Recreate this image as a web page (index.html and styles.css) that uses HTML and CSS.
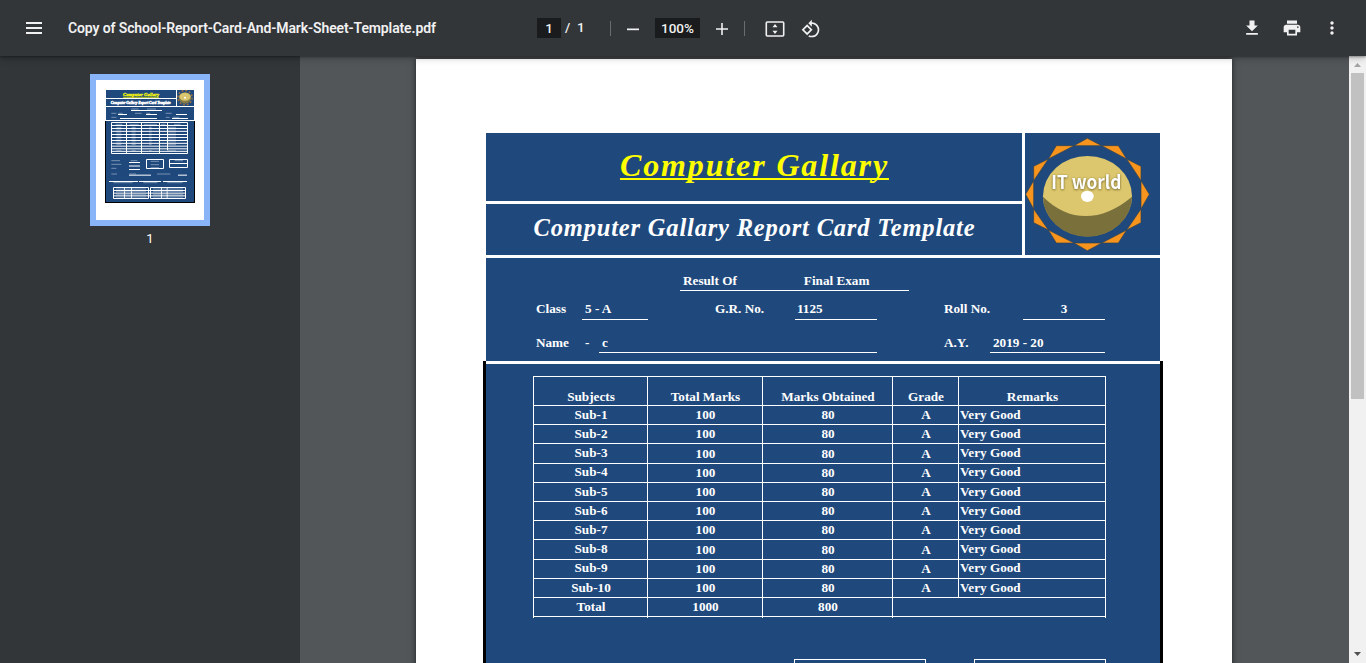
FILE: index.html
```html
<!DOCTYPE html>
<html lang="en">
<head>
<meta charset="utf-8">
<title>Copy of School-Report-Card-And-Mark-Sheet-Template.pdf</title>
<link rel="stylesheet" href="styles.css">
</head>
<body>
<header class="toolbar">
  <svg class="menu" width="24" height="24" viewBox="0 0 24 24"><path d="M4 6h16v2H4zm0 5h16v2H4zm0 5h16v2H4z"/></svg>
  <span class="title">Copy of School-Report-Card-And-Mark-Sheet-Template.pdf</span>
  <div class="controls">
    <span class="box page-no">1</span><span class="count">/&nbsp; 1</span>
    <i class="divider"></i>
    <svg class="minus" width="20" height="20" viewBox="0 0 20 20"><path d="M4 9.5h12v1.7H4z"/></svg>
    <span class="box zoom">100%</span>
    <svg class="plus" width="20" height="20" viewBox="0 0 20 20"><path d="M4 9.2h5.2V4h1.6v5.2H16v1.6h-5.2V16H9.200v-5.200H4z"/></svg>
    <i class="divider second"></i>
    <svg class="fit" width="20" height="20" viewBox="0 0 20 20"><rect x="1.300" y="3" width="17.400" height="14" rx="1" fill="none" stroke="#f1f1f1" stroke-width="1.600"/><path d="M10 5l2.500 3.200h-5zM10 15l2.500-3.200h-5z"/></svg>
    <svg class="rotate" width="20" height="20" viewBox="0 0 24 24"><path d="M7.340 6.410L.860 12.900l6.490 6.480 6.490-6.480-6.500-6.490zM3.690 12.900l3.660-3.660L11 12.900l-3.660 3.660-3.650-3.660zm15.670-6.260C17.610 4.880 15.300 4 13 4V.760L8.760 5 13 9.240V6c1.790 0 3.580.680 4.950 2.050 2.730 2.730 2.730 7.170 0 9.900C16.580 19.320 14.790 20 13 20c-.970 0-1.940-.210-2.840-.610l-1.490 1.490C10.020 21.620 11.510 22 13 22c2.300 0 4.610-.880 6.360-2.640 3.520-3.510 3.520-9.210 0-12.720z"/></svg>
  </div>
  <div class="actions">
    <svg width="20" height="20" viewBox="0 0 24 24"><path d="M19 9h-4V3H9v6H5l7 7 7-7zM5 18v2h14v-2H5z"/></svg>
    <svg width="20" height="20" viewBox="0 0 24 24"><path d="M19 8H5c-1.660 0-3 1.340-3 3v6h4v4h12v-4h4v-6c0-1.660-1.340-3-3-3zm-3 11H8v-5h8v5zm3-7c-.550 0-1-.450-1-1s.450-1 1-1 1 .450 1 1-.450 1-1 1zm-1-9H6v4h12V3z"/></svg>
    <svg width="20" height="20" viewBox="0 0 24 24"><path d="M12 8c1.100 0 2-.900 2-2s-.900-2-2-2-2 .900-2 2 .900 2 2 2zm0 2c-1.100 0-2 .900-2 2s.900 2 2 2 2-.900 2-2-.900-2-2-2zm0 6c-1.100 0-2 .900-2 2s.900 2 2 2 2-.900 2-2-.900-2-2-2z"/></svg>
  </div>
</header>
<div class="viewer">
  <aside class="sidebar">
    <div class="thumb">
      <svg width="108" height="140" viewBox="48 48 324 420">
        <path fill="#000" d="M75 171h270v246H75z"/>
        <path fill="#1f497d" d="M78 78h264v90H78zM78 171h264v243H78z"/>
        <path fill="#fff" d="M78 102h210v3H78zM78 126h264v3H78zM288 78h3v48h-3z"/>
        <text x="183" y="96" class="mini yellow" text-anchor="middle" textLength="108">Computer Gallary</text>
        <text x="182" y="119" class="mini small" text-anchor="middle" textLength="180">Computer Gallary Report Card Template</text>
        <circle cx="315" cy="101" r="21.500" fill="none" stroke="#a57340" stroke-width="4" stroke-dasharray="6 5.260"/>
        <ellipse cx="315" cy="102" rx="18.500" ry="17" fill="#877b48"/>
        <ellipse cx="315" cy="98" rx="17" ry="12" fill="#d8c56e"/><circle cx="315" cy="101" r="3" fill="#fff"/>
        <g stroke="#fff" stroke-width="3" fill="none">
          <path d="M153 139.500h93M114 151.500h27M198 151.500h33M288 151.500h33M120 163.500h111M276 163.500h48"/>
          <path d="M94.500 175.500h228v93h-228zM139.500 175v93M184.500 175v93M238.500 175v93M262.500 175v84M94 184.500h228M94 193.500h228M94 202h228M94 211.500h228M94 220.500h228M94 229.500h228M94 238h228M94 246.500h228M94 254.500h228M94 262h228"/>
          <path d="M147 295.500h33M147 306h33M147 316.500h33M199.500 286.500h51v27h-51zM268.500 286.500h54v24h-54zM268 298.500h54M147 333.500h66M294 333.500h27M87 352.500h87M177 352.500h66M249 352.500h72"/>
          <path d="M100.500 370.500h105v33h-105zM211.500 370.500h105v33h-105zM100 379.500h216M100 387.500h216M100 395.500h216M133.500 370v33M154.500 370v33M244.500 370v33M261.500 370v33"/>
        </g>
        <g stroke="#a5b6cb" stroke-width="3" opacity=".65">
          <path d="M154 135h22M201 135h27M94 148h15M115 148h13M165 148h20M199 148h12M257 148h18M94 160h15M257 160h12M278 160h20"/>
          <path d="M107 181h20M148 181h28M191 181h40M243 181h14M282 181h20M109 190h15M155 190h12M207 190h8M264 190h24M109 198h15M155 198h12M207 198h8M264 198h24M109 207h15M155 207h12M207 207h8M264 207h24M109 216h15M155 216h12M207 216h8M264 216h24M109 225h15M155 225h12M207 225h8M264 225h24M109 234h15M155 234h12M207 234h8M264 234h24M109 242h15M155 242h12M207 242h8M264 242h24M109 259h15M155 259h12M207 259h8M264 259h24"/>
          <path d="M94 290h26M152 290h20M94 301h30M94 313h15M212 292h25M212 302h25M212 311h25M284 290h25M94 330h17M148 330h20M231 330h40M100 356h58M190 356h42M262 356h46M108 375h90M219 375h90M108 383h90M219 383h90M108 391h90M219 391h90M108 399h90M219 399h90"/>
        </g>
      </svg>
    </div>
    <span class="thumb-no">1</span>
  </aside>
  <main class="canvas">
    <article class="page">
      <section class="head">
        <div class="names">
          <h1>Computer Gallary</h1>
          <h2>Computer Gallary Report Card Template</h2>
        </div>
        <div class="logo">
          <svg width="135" height="122" viewBox="615 24 405 366">
            <path fill="#f7941d" stroke="#33414a" stroke-width="2" d="M802 40L845 62H895L920 102L963 124V167L988 208L963 252V293L920 315L895 354H845L802 377L762 354H709L685 315L641 293V252L617 208L641 167V124L685 102L709 62H762Z"/>
            <path fill="#1f497d" stroke="#33414a" stroke-width="2" d="M762 62H845L920 102L963 167V252L920 315L845 354H762L685 315L641 252V167L685 102Z"/>
            <ellipse cx="802.500" cy="213.500" rx="133.500" ry="120.500" fill="#dcc76e"/>
            <path fill="#79703c" d="M669 215C747 293 845 292 936 215A133.500 120.500 0 0 1 669 215Z"/>
            <text class="logo-text" x="694" y="192" textLength="210" lengthAdjust="spacingAndGlyphs">IT world</text>
            <ellipse cx="802" cy="214" rx="19" ry="17" fill="#fff"/>
          </svg>
        </div>
      </section>
      <section class="info">
        <div class="row result"><div class="line"><span>Result Of</span><span>Final Exam</span></div></div>
        <div class="row ids"><span>Class</span><span class="line">5 - A</span><span class="gap">G.R. No.</span><span class="line tight">1125</span><span class="gap">Roll No.</span><span class="line center">3</span></div>
        <div class="row person"><span>Name</span><span>-</span><span class="line">c</span><span class="gap">A.Y.</span><span class="line">2019 - 20</span></div>
      </section>
      <section class="marks">
        <table>
          <colgroup><col class="c1"><col class="c2"><col class="c3"><col class="c4"><col class="c5"></colgroup>
          <thead><tr><th>Subjects</th><th>Total Marks</th><th>Marks Obtained</th><th>Grade</th><th>Remarks</th></tr></thead>
          <tbody>
            <tr><td>Sub-1</td><td>100</td><td>80</td><td>A</td><td>Very Good</td></tr>
            <tr><td>Sub-2</td><td>100</td><td>80</td><td>A</td><td>Very Good</td></tr>
            <tr class="tall"><td>Sub-3</td><td>100</td><td>80</td><td>A</td><td>Very Good</td></tr>
            <tr class="raised"><td>Sub-4</td><td>100</td><td>80</td><td>A</td><td>Very Good</td></tr>
            <tr><td>Sub-5</td><td>100</td><td>80</td><td>A</td><td>Very Good</td></tr>
            <tr><td>Sub-6</td><td>100</td><td>80</td><td>A</td><td>Very Good</td></tr>
            <tr><td>Sub-7</td><td>100</td><td>80</td><td>A</td><td>Very Good</td></tr>
            <tr class="tall"><td>Sub-8</td><td>100</td><td>80</td><td>A</td><td>Very Good</td></tr>
            <tr class="raised"><td>Sub-9</td><td>100</td><td>80</td><td>A</td><td>Very Good</td></tr>
            <tr><td>Sub-10</td><td>100</td><td>80</td><td>A</td><td>Very Good</td></tr>
            <tr><td>Total</td><td>1000</td><td>800</td><td colspan="2"></td></tr>
          </tbody>
          <tfoot><tr><td></td><td></td><td></td><td colspan="2"></td></tr></tfoot>
        </table>
        <div class="summary"><div></div><div></div></div>
      </section>
    </article>
  </main>
  <div class="scrollbar">
    <svg width="17" height="17" viewBox="0 0 17 17"><path fill="#a3a3a3" d="M5 11h7L8.500 7z"/></svg>
    <div class="thumb-bar"></div>
    <svg width="17" height="17" viewBox="0 0 17 17"><path fill="#505050" d="M5 6h7l-3.500 4z"/></svg>
  </div>
</div>
</body>
</html>
```
FILE: styles.css
```css
* { box-sizing: border-box; }
body { margin: 0; width: 1366px; height: 663px; overflow: hidden; display: flex; flex-direction: column; font-family: Roboto, sans-serif; background: #525659; }
svg { display: block; flex: none; fill: #f1f1f1; }

.toolbar { position: relative; z-index: 2; flex: none; height: 56px; display: flex; align-items: center; background: #323639; color: #f1f1f1; box-shadow: 0 -2px 8px rgba(0,0,0,.09), 0 4px 8px rgba(0,0,0,.06), 0 1px 2px rgba(0,0,0,.3), 0 2px 6px rgba(0,0,0,.15); }
.menu { margin-left: 22px; }
.title { width: 469px; padding-left: 22px; font-size: 14px; font-weight: 600; letter-spacing: -.12px; white-space: nowrap; }
.controls { width: 310px; margin-left: 22px; display: flex; align-items: center; font-size: 13.5px; font-weight: 500; }
.box { height: 20px; line-height: 21px; text-align: center; background: #191b1c; }
.page-no { width: 24px; }
.count { width: 38px; padding-left: 4px; margin-top: -2px; white-space: nowrap; }
.divider { width: 1px; height: 15px; margin-left: 11px; background: #6a6d70; }
.minus { margin-left: 12px; margin-top: 1px; }
.zoom { width: 45px; margin-left: 12px; font-size: 13.5px; }
.plus { margin-left: 12px; margin-top: 2px; }
.second { margin-left: 12px; }
.fit { margin-left: 20px; margin-top: 2px; }
.rotate { margin-left: 16px; margin-top: 2px; }
.actions { margin-left: auto; margin-right: 24px; display: flex; gap: 20px; }

.viewer { flex: 1; min-height: 0; display: flex; }
.sidebar { width: 300px; flex: none; padding-top: 18px; display: flex; flex-direction: column; align-items: center; background: #323639; color: #fff; }
.thumb { border: 6px solid #8ab4f8; background: #fff; }
.thumb-no { margin-top: 5px; font-size: 13px; line-height: 16px; }
.mini { font: italic bold 14px "Liberation Serif", serif; fill: #fff; stroke: #fff; stroke-width: .8px; }
.mini.small { font-size: 11px; stroke-width: 1.2px; }
.mini.yellow { fill: #ff0; stroke: #ff0; text-decoration: underline; }

.canvas { flex: 1; min-width: 0; padding: 3px 0 0 116px; overflow: hidden; }
.page { width: 816px; height: 1056px; padding: 74px 69px 0 67px; background: #fff; box-shadow: 0 0 6px rgba(0,0,0,.6); color: #fff; font: bold 13.2px "Liberation Serif", serif; }
.head { margin: 0 3px; display: flex; gap: 3px; }
.names { width: 536px; display: flex; flex-direction: column; gap: 3px; }
h1, h2 { margin: 0; text-align: center; white-space: nowrap; font-style: italic; font-weight: bold; background: #1f497d; }
h1 { height: 68px; padding: 0 0 0 1px; color: #ff0; font-size: 32px; line-height: 65px; letter-spacing: 1.87px; text-decoration: underline; text-decoration-thickness: 2px; text-underline-offset: 2px; text-decoration-skip-ink: none; }
h2 { height: 51px; padding-left: 1px; font-size: 24.500px; line-height: 48px; letter-spacing: .82px; }
.logo { width: 135px; height: 122px; background: #1f497d; }
.logo-text { font: bold 55px "Noto Sans CJK SC", "Noto Sans", sans-serif; fill: #fff; filter: drop-shadow(0 2px 3px rgba(60,50,10,.75)); }

.info { height: 103px; margin: 3px 3px; padding-left: 50px; background: #1f497d; }
.row { display: grid; align-items: end; line-height: 15px; white-space: nowrap; }
.row span { padding-bottom: 4px; }
.row .line { border-bottom: 1px solid #fff; padding: 0 0 3px 3px; }
.row .tight { padding-left: 2px; }
.row .center { text-align: center; padding-left: 0; }
.row .gap { padding-left: 67px; }
.result { height: 33px; grid-template-columns: 229px; padding-left: 144px; }
.result .line { display: flex; gap: 67px; padding-bottom: 2px; }
.result .line span { padding: 0; }
.ids { height: 29px; grid-template-columns: 46px 66px 147px 82px 146px 82px; }
.row.ids .line { padding-bottom: 3px; }
.row.ids > span:not(.line) { padding-bottom: 4px; }
.person { height: 33px; grid-template-columns: 49px 14px 278px 113px 115px; }
.row.person > span:not(.line) { padding-bottom: 3px; }
.row.person .line { padding-bottom: 2px; }

.marks { height: 600px; border: solid #000; border-width: 0 3px; margin-top: 0; padding: 12px 0 0 47px; background: #1f497d; position: relative; }
.marks::before { content: ""; position: absolute; left: -3px; right: -3px; top: -3px; height: 3px; border: solid #000; border-width: 0 3px; }
table { width: 573px; table-layout: fixed; border-spacing: 0; border-right: 1px solid #fff; }
.c1 { width: 114px; } .c2 { width: 115px; } .c3 { width: 130px; } .c4 { width: 66px; } .c5 { width: 147px; }
th, td { height: 19px; padding: 0 0 0 1px; line-height: 15px; text-align: center; vertical-align: top; border-top: 1px solid #fff; border-left: 1px solid #fff; }
th { height: 29px; padding-top: 12px; }
td { padding-top: 1px; }
td:nth-child(5) { text-align: left; padding-left: 1px; }
.tall td { height: 20px; padding-top: 2px; }
.tall td:first-child, .tall td:last-child { padding-top: 1px; }
.raised td:first-child, .raised td:last-child { padding-top: 0; }
tfoot td { height: 2px; line-height: 0; padding: 0; }
.summary { display: flex; gap: 48px; margin: 41px 0 0 261px; }
.summary div { width: 132px; height: 60px; border: 1px solid #fff; }

.scrollbar { width: 17px; flex: none; display: flex; flex-direction: column; align-items: center; background: #f1f1f1; }
.thumb-bar { width: 13px; height: 326px; background: #c1c1c1; margin-bottom: auto; }
```
